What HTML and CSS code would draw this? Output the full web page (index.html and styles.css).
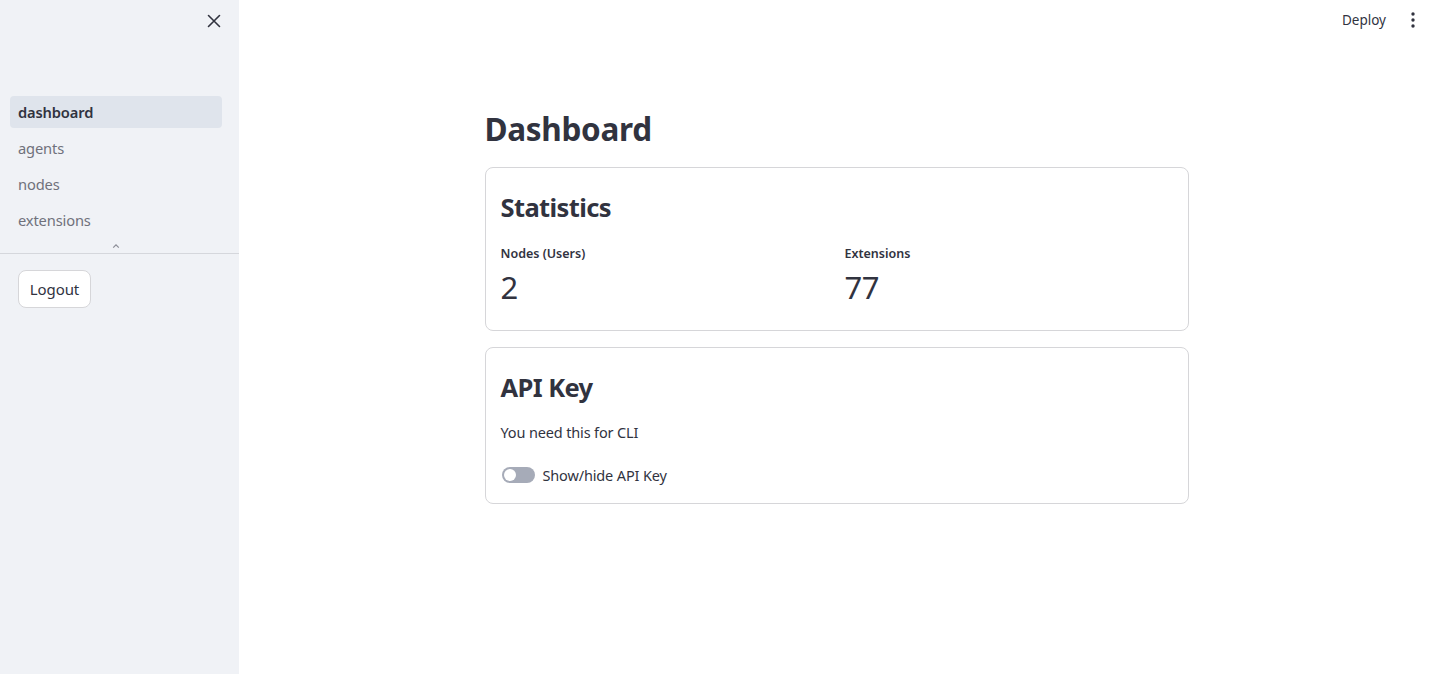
FILE: index.html
```html
<!DOCTYPE html>
<html lang="en">
<head>
<meta charset="utf-8">
<title>Dashboard</title>
<link rel="stylesheet" href="styles.css">
</head>
<body>
<aside class="sidebar">
  <div class="sidebar-top">
    <button class="close-btn" aria-label="Close sidebar">
      <svg width="14" height="14" viewBox="0 0 14 14"><path d="M1.5 1.5 L12.5 12.5 M12.5 1.5 L1.5 12.5" stroke="#31333f" stroke-width="1.6" stroke-linecap="round"/></svg>
    </button>
  </div>
  <nav class="nav">
    <a class="nav-item active">dashboard</a>
    <a class="nav-item">agents</a>
    <a class="nav-item">nodes</a>
    <a class="nav-item">extensions</a>
  </nav>
  <div class="collapse">
    <svg width="8" height="6" viewBox="0 0 8 6"><path d="M1.2 4.6 L4 1.8 L6.8 4.6" fill="none" stroke="#8a8c96" stroke-width="1.2"/></svg>
  </div>
  <div class="sidebar-body">
    <button class="btn">Logout</button>
  </div>
</aside>
<main class="main">
  <header class="topbar">
    <span class="deploy">Deploy</span>
    <span class="kebab">
      <svg width="4" height="16" viewBox="0 0 4 16"><circle cx="2" cy="2" r="1.7" fill="#31333f"/><circle cx="2" cy="8" r="1.7" fill="#31333f"/><circle cx="2" cy="14" r="1.7" fill="#31333f"/></svg>
    </span>
  </header>
  <section class="content">
    <h1 class="title">Dashboard</h1>
    <div class="card card-stats">
      <h2 class="card-title">Statistics</h2>
      <div class="metrics">
        <div class="metric">
          <div class="metric-label">Nodes (Users)</div>
          <div class="metric-value">2</div>
        </div>
        <div class="metric">
          <div class="metric-label">Extensions</div>
          <div class="metric-value">77</div>
        </div>
      </div>
    </div>
    <div class="card card-api">
      <h2 class="card-title">API Key</h2>
      <p class="text">You need this for CLI</p>
      <label class="toggle-row">
        <span class="toggle"><span class="knob"></span></span>
        <span class="toggle-label">Show/hide API Key</span>
      </label>
    </div>
  </section>
</main>
</body>
</html>
```
FILE: styles.css
```css
* { box-sizing: border-box; }
html, body { margin: 0; padding: 0; height: 100%; }
body {
  display: flex;
  font-family: "Noto Sans", "Open Sans", sans-serif;
  color: #31333f;
  background: #ffffff;
  overflow: hidden;
}
.sidebar {
  width: 239px;
  flex: none;
  height: 674px;
  background: #f0f2f6;
  display: flex;
  flex-direction: column;
}
.sidebar-top {
  height: 96px;
  display: flex;
  justify-content: flex-end;
  align-items: flex-start;
  padding: 14px 18px 0 0;
}
.close-btn {
  border: 0;
  background: transparent;
  padding: 0;
  width: 14px;
  height: 14px;
  display: flex;
}
.nav {
  display: flex;
  flex-direction: column;
  gap: 4px;
  padding: 0 17px 0 10px;
}
.nav-item {
  height: 32px;
  display: flex;
  align-items: center;
  padding-left: 8px;
  border-radius: 4px;
  font-size: 14.7px;
  color: #6f717b;
  letter-spacing: -0.15px;
}
.nav-item.active {
  background: #dfe4ec;
  color: #31333f;
  font-weight: 600;
}
.collapse {
  height: 18px;
  display: flex;
  justify-content: center;
  align-items: center;
  padding: 2px 7px 0 0;
  border-bottom: 1px solid #d5d7dc;
}
.sidebar-body {
  padding: 16px 18px;
}
.btn {
  font-family: inherit;
  font-size: 15px;
  color: #31333f;
  background: #ffffff;
  border: 1px solid #d6d6d9;
  border-radius: 8px;
  width: 73px;
  height: 38px;
  padding: 0;
  letter-spacing: -0.1px;
}
.main {
  flex: 1;
  height: 674px;
  display: flex;
  flex-direction: column;
}
.topbar {
  height: 40px;
  display: flex;
  justify-content: flex-end;
  align-items: center;
  padding-right: 19px;
  gap: 25px;
}
.deploy {
  font-size: 13.5px;
  color: #31333f;
}
.kebab { display: flex; }
.content {
  width: 704px;
  margin: 0 auto;
  display: flex;
  flex-direction: column;
  padding-top: 66px;
}
.title {
  margin: 0;
  font-size: 31.5px;
  font-weight: 700;
  line-height: 46px;
  letter-spacing: -0.3px;
}
.card {
  border: 1px solid #d6d6d9;
  border-radius: 8px;
  padding: 15px 15px 16px;
  display: flex;
  flex-direction: column;
}
.card-stats {
  margin-top: 15px;
  padding-bottom: 19px;
}
.card-title {
  margin: 0;
  font-size: 25.5px;
  font-weight: 700;
  line-height: 48px;
  letter-spacing: -0.6px;
}
.metrics {
  display: flex;
  gap: 16px;
  margin-top: 14px;
}
.metric { flex: 1; }
.metric-label {
  font-size: 12.5px;
  font-weight: 600;
  line-height: 18px;
}
.metric-value {
  font-size: 31px;
  line-height: 48px;
  letter-spacing: -0.5px;
}
.card-api {
  margin-top: 16px;
  padding-bottom: 16px;
}
.text {
  margin: 9px 0 0;
  font-size: 14.5px;
  line-height: 24px;
  letter-spacing: -0.15px;
}
.toggle-row {
  margin-top: 19px;
  display: flex;
  align-items: center;
  gap: 8px;
  height: 24px;
}
.toggle {
  width: 33px;
  height: 16px;
  border-radius: 8px;
  background: #a6abb8;
  margin-left: 1px;
  display: flex;
  align-items: center;
  padding-left: 2px;
}
.knob {
  width: 12px;
  height: 12px;
  border-radius: 50%;
  background: #ffffff;
}
.toggle-label {
  font-size: 14.5px;
  letter-spacing: -0.15px;
}
```
